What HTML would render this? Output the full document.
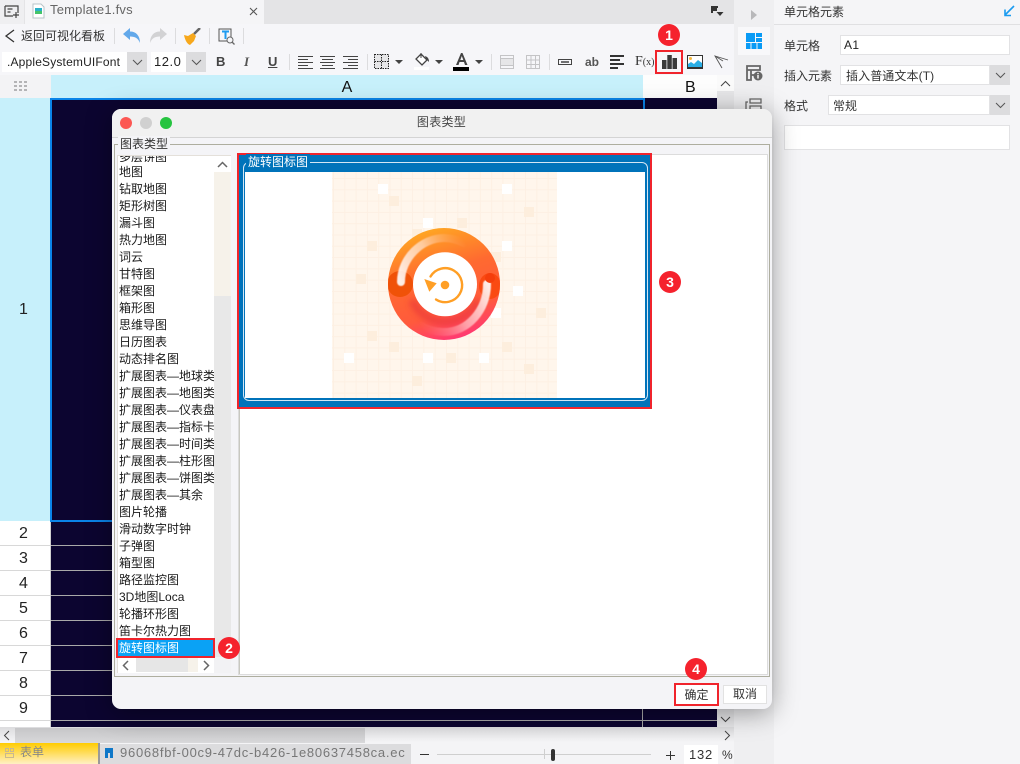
<!DOCTYPE html>
<html><head><meta charset="utf-8">
<style>
html,body{margin:0;padding:0;background:#f2f2f4}
#p{position:relative;width:1020px;height:764px;overflow:hidden;background:#f2f2f4;font-family:"Liberation Sans","Noto Sans CJK SC",sans-serif;font-size:12px;color:#222}
#p div,#p svg{position:absolute}
.t{white-space:nowrap;line-height:16px}
.b{background:#fff}
.sep{width:1px;background:#dcdcde}
.rn{left:0;width:50px;padding-right:3px;text-align:center;font-size:16px;line-height:25px;height:25px;background:#fff;color:#222;border-bottom:1px solid #d8d8d8;box-sizing:border-box}
.gl{left:51px;width:666px;height:1px;background:#a9a9a9}
.li{left:119px;width:95px;height:17px;line-height:17px;overflow:hidden;white-space:nowrap;font-size:12px;color:#1a1a1a}
.w{background:#fff}.o{background:#fdeedd}
.sq{width:10px;height:10px}
.badge{width:22px;height:22px;border-radius:50%;background:#f5222d;color:#fff;font-weight:bold;font-size:14px;line-height:22px;text-align:center}
.dd{width:0;height:0;border-left:4px solid transparent;border-right:4px solid transparent;border-top:4px solid #444}
</style></head><body><div id="p">

<!-- tab bar -->
<div style="left:0;top:0;width:734px;height:24px;background:#e4e4e6"></div>
<div style="left:0;top:0;width:24px;height:24px;background:#efeff1"></div>
<svg style="left:4px;top:5px" width="17" height="14" viewBox="0 0 17 14" fill="none" stroke="#444" stroke-width="1.2"><path d="M1 1h13v7M1 1v10h8M3.500 4h5M3.500 7h3"/><path d="M12 7v6M9 10h6"/></svg>
<div style="left:25px;top:0;width:239px;height:24px;background:#f5f5f7"></div>
<svg style="left:32px;top:3px" width="13" height="16" viewBox="0 0 13 16"><path d="M1 1h8l3 3v11H1z" fill="#fff" stroke="#b8c4c8"/><rect x="3" y="5" width="7" height="3" fill="#2ab0c8"/><rect x="3" y="8" width="7" height="3" fill="#45c46a"/></svg>
<div class="t" style="left:50px;top:2px;font-size:13px;color:#666;letter-spacing:.2px">Template1.fvs</div>
<svg style="left:248px;top:6px" width="11" height="11" viewBox="0 0 11 11" stroke="#555" stroke-width="1.1"><path d="M2 2l7 7M9 2l-7 7"/></svg>
<svg style="left:710px;top:5px" width="14" height="12" viewBox="0 0 14 12" fill="#333"><path d="M1 1h7v2H3v5H1z"/><path d="M3 3h4v3H3z"/><path d="M6.500 7h7L10 11z"/></svg>

<!-- toolbar -->
<div style="left:0;top:24px;width:734px;height:51px;background:#f6f6f9"></div>
<svg style="left:4px;top:29px" width="12" height="14" viewBox="0 0 12 14" fill="none" stroke="#333" stroke-width="1.300"><path d="M10 1L2 7l8 6"/></svg>
<div class="t" style="left:21px;top:28px;font-size:12px;color:#333">返回可视化看板</div>
<div class="sep" style="left:114px;top:28px;height:16px"></div>
<svg style="left:122px;top:28px" width="19" height="16" viewBox="0 0 19 16"><path d="M1 6L8 0v3.500c6 0 10 4 10 11.500-2-5-5-6.500-10-6.500V12z" fill="#62a8ea"/></svg>
<svg style="left:149px;top:28px" width="19" height="16" viewBox="0 0 19 16"><path d="M18 6L11 0v3.500C5 3.500 1 7.500 1 15c2-5 5-6.500 10-6.500V12z" fill="#d2d2d4"/></svg>
<div class="sep" style="left:175px;top:28px;height:16px"></div>
<svg style="left:183px;top:28px" width="18" height="17" viewBox="0 0 18 17"><path d="M11 6l6-6" stroke="#666" stroke-width="2.500"/><path d="M1 7l4 1 5-3 3 3-2 5-4 4c-3-1-5-5-6-10z" fill="#f7a81c"/></svg>
<div class="sep" style="left:209px;top:28px;height:16px"></div>
<svg style="left:218px;top:28px" width="17" height="17" viewBox="0 0 17 17" fill="none"><path d="M1 1h12v12H1z" stroke="#555"/><path d="M4 3.500h7M7.500 3.500V11" stroke="#1e9bf0" stroke-width="2"/><circle cx="12" cy="12" r="3" fill="#f6f6f9" stroke="#666"/><path d="M14 14l2.500 2.500" stroke="#666" stroke-width="1.300"/></svg>
<div class="sep" style="left:243px;top:28px;height:16px"></div>

<div class="b" style="left:2px;top:52px;width:125px;height:20px"></div>
<div style="left:127px;top:52px;width:20px;height:20px;background:#dcdcde"></div>
<svg style="left:132px;top:59px" width="11" height="7" viewBox="0 0 11 7" fill="none" stroke="#555" stroke-width="1"><path d="M1 1l4.500 4.500L10 1"/></svg>
<div class="t" style="left:7px;top:54px;font-size:12px;color:#222;letter-spacing:.17px">.AppleSystemUIFont</div>
<div class="b" style="left:151px;top:52px;width:35px;height:20px"></div>
<div style="left:186px;top:52px;width:20px;height:20px;background:#dcdcde"></div>
<svg style="left:191px;top:59px" width="11" height="7" viewBox="0 0 11 7" fill="none" stroke="#555" stroke-width="1"><path d="M1 1l4.500 4.500L10 1"/></svg>
<div class="t" style="left:154px;top:54px;font-size:13px;color:#222;letter-spacing:.5px">12.0</div>
<div class="t" style="left:216px;top:54px;font-size:13px;font-weight:bold;color:#444">B</div>
<div class="t" style="left:244px;top:54px;font-size:13px;font-weight:bold;font-style:italic;font-family:'Liberation Serif',serif;color:#555">I</div>
<div class="t" style="left:268px;top:54px;font-size:13px;font-weight:bold;color:#444;text-decoration:underline">U</div>
<div class="sep" style="left:289px;top:54px;height:16px"></div>
<svg style="left:298px;top:56px" width="60" height="13" viewBox="0 0 60 13" stroke="#444" stroke-width="1"><path d="M0 .5h15M0 3.500h10M0 6.500h15M0 9.500h10M0 12.500h15"/><path d="M22 .5h15M24 3.500h11M22 6.500h15M24 9.500h11M22 12.500h15"/><path d="M45 .5h15M50 3.500h10M45 6.500h15M50 9.500h10M45 12.500h15"/></svg>
<div class="sep" style="left:367px;top:54px;height:16px"></div>
<svg style="left:374px;top:54px" width="16" height="16" viewBox="0 0 16 16" fill="#e6e6e8" stroke="#222" stroke-dasharray="1.500 1"><path d="M.5.500h14v14H.5zM.5 7.500h14M7.500.500v14"/></svg>
<div class="dd" style="left:395px;top:60px"></div>
<svg style="left:413px;top:52px" width="18" height="18" viewBox="0 0 18 18"><path d="M8 2l6 6-5 5-6-6z" fill="#fff" stroke="#444" stroke-width="1.300"/><path d="M8 1v5" stroke="#444"/><path d="M12 4c3 1 4 3 4 6l-3-3z" fill="#444"/><rect x="1" y="15" width="15" height="3" fill="#fff"/></svg>
<div class="dd" style="left:435px;top:60px"></div>
<svg style="left:453px;top:52px" width="17" height="19" viewBox="0 0 17 19"><path d="M3 13L8 1h1.500l5 12h-2.500l-1-3H6.500l-1 3zM7.300 8h3L8.800 4z" fill="#444"/><rect x="0" y="15" width="16" height="4" fill="#000"/></svg>
<div class="dd" style="left:475px;top:60px"></div>
<div class="sep" style="left:491px;top:54px;height:16px"></div>
<svg style="left:500px;top:55px" width="42" height="14" viewBox="0 0 42 14" fill="none" stroke="#c4c4c6"><path d="M.5.500h13v13H.5z"/><rect x="1" y="4" width="12" height="6" fill="#e6e6e8" stroke="none"/><path d="M1 3.500h12M1 10.500h12"/><path d="M26.500.500h13v13h-13zM26.500 5h13M26.500 9.500h13M31 .500v13M35.500 .500v13"/></svg>
<div class="sep" style="left:549px;top:54px;height:16px"></div>
<svg style="left:558px;top:59px" width="14" height="6" viewBox="0 0 14 6" fill="none" stroke="#444"><path d="M.5.500h13v5H.5z"/><path d="M3 3h8" stroke-width="1.500"/></svg>
<div class="t" style="left:585px;top:54px;font-size:12px;font-weight:bold;color:#555">ab</div>
<svg style="left:610px;top:55px" width="15" height="14" viewBox="0 0 15 14" stroke="#333" stroke-width="2"><path d="M0 1h14M0 5h10M0 9h14M0 13h8"/></svg>
<div class="t" style="left:635px;top:54px;font-size:14px;font-family:'Liberation Serif',serif;color:#333">F<span style="font-size:10px">(x)</span></div>
<div style="left:655px;top:50px;width:28px;height:24px;border:2px solid #f0242c;box-sizing:border-box"></div>
<svg style="left:662px;top:55px" width="15" height="14" viewBox="0 0 15 14" fill="#3a3a3a"><rect x="0" y="5" width="4.500" height="9"/><rect x="5.300" y="0" width="4.500" height="14"/><rect x="10.500" y="3" width="4.500" height="11"/></svg>
<svg style="left:687px;top:55px" width="16" height="14" viewBox="0 0 16 14"><rect width="16" height="14" fill="#333"/><rect x="1" y="1" width="14" height="11" fill="#fff"/><circle cx="3.500" cy="3.500" r="1.500" fill="#f5b83d"/><path d="M1 12l0-3 3-2 3 2 4-4 4 3v4z" fill="#29aee6"/></svg>
<svg style="left:714px;top:55px" width="15" height="14" viewBox="0 0 15 14" fill="none" stroke="#555" stroke-width=".9"><path d="M14 5L1 1l7 12M1 1l8 5"/></svg>

<!-- sheet header -->
<div style="left:0;top:75px;width:50px;height:23px;background:#f3f3f5"></div>
<svg style="left:14px;top:81px" width="13" height="11" fill="#b4b4b6"><rect x="0" y="0" width="3" height="2"/><rect x="5" y="0" width="3" height="2"/><rect x="10" y="0" width="3" height="2"/><rect x="0" y="4" width="3" height="2"/><rect x="5" y="4" width="3" height="2"/><rect x="10" y="4" width="3" height="2"/><rect x="0" y="8" width="3" height="2"/><rect x="5" y="8" width="3" height="2"/><rect x="10" y="8" width="3" height="2"/></svg>
<div style="left:51px;top:75px;width:592px;height:23px;background:#c7f0fb;line-height:25px;text-align:center;font-size:16px;color:#111">A</div>
<div style="left:643px;top:75px;width:74px;height:23px;background:#fdfdfd"></div>
<div class="t" style="left:685px;top:75px;line-height:25px;font-size:16px;color:#111">B</div>
<div style="left:717px;top:75px;width:17px;height:652px;background:#e6e6e8"></div>
<div style="left:717px;top:75px;width:17px;height:16px;background:#fafafa"></div>
<svg style="left:720px;top:80px" width="11" height="7" fill="none" stroke="#444"><path d="M1 6l4.500-4.500L10 6"/></svg>
<svg style="left:720px;top:716px" width="11" height="7" fill="none" stroke="#444"><path d="M1 1l4.500 4.500L10 1"/></svg>

<!-- sheet -->
<div style="left:51px;top:98px;width:666px;height:629px;background:#0c0530"></div>
<div style="left:0;top:98px;width:50px;height:423px;padding-right:3px;box-sizing:border-box;background:#c7f0fb;text-align:center;line-height:423px;font-size:16px">1</div>
<div class="rn" style="top:521px">2</div><div class="rn" style="top:546px">3</div><div class="rn" style="top:571px">4</div><div class="rn" style="top:596px">5</div><div class="rn" style="top:621px">6</div><div class="rn" style="top:646px">7</div><div class="rn" style="top:671px">8</div><div class="rn" style="top:696px">9</div>
<div style="left:0;top:721px;width:50px;height:6px;background:#fff"></div>
<div style="left:50px;top:98px;width:1px;height:629px;background:#d0d0d0"></div>
<div class="gl" style="top:545px"></div><div class="gl" style="top:570px"></div><div class="gl" style="top:595px"></div><div class="gl" style="top:620px"></div><div class="gl" style="top:645px"></div><div class="gl" style="top:670px"></div><div class="gl" style="top:695px"></div><div class="gl" style="top:720px"></div>
<div style="left:642px;top:522px;width:1px;height:205px;background:#a9a9a9"></div>
<div style="left:50px;top:98px;width:595px;height:424px;border:2px solid #0a84e8;box-sizing:border-box"></div>

<!-- bottom -->
<div style="left:0;top:727px;width:734px;height:37px;background:linear-gradient(#dcdcde,#f4f4f6 40%,#f4f4f6)"></div>
<div style="left:15px;top:728px;width:350px;height:15px;background:linear-gradient(#c6c6c8,#d8d8da)"></div>
<svg style="left:3px;top:730px" width="8" height="11" fill="none" stroke="#444"><path d="M6 1L1.500 5.500 6 10"/></svg>
<svg style="left:723px;top:730px" width="8" height="11" fill="none" stroke="#444"><path d="M2 1l4.500 4.500L2 10"/></svg>
<div style="left:0;top:743px;width:98px;height:21px;background:linear-gradient(#ffcc00,#fff0c4)"></div>
<div class="t" style="left:20px;top:744px;font-size:12px;color:#888">表单</div>
<svg style="left:5px;top:748px" width="9" height="10" fill="none" stroke="#c8b890"><path d="M.5.500h3v3h-3zM5.500.500h3v3h-3zM.5 5.500h8v4h-8z"/></svg>
<div style="left:98px;top:743px;width:2px;height:21px;background:#999"></div>
<div style="left:100px;top:744px;width:311px;height:20px;background:#dcdcde"></div>
<svg style="left:105px;top:748px" width="8" height="10"><path d="M0 0h8v10H5V5H3v5H0z" fill="#0f78c8"/></svg>
<div class="t" style="left:120px;top:745px;font-size:13px;color:#777;letter-spacing:.74px">96068fbf-00c9-47dc-b426-1e80637458ca.ec</div>
<div style="left:420px;top:754px;width:9px;height:1px;background:#333"></div>
<div style="left:437px;top:754px;width:214px;height:1px;background:#cfcfcf"></div>
<div style="left:544px;top:749px;width:1px;height:10px;background:#cfcfcf"></div>
<div style="left:551px;top:749px;width:4px;height:12px;border-radius:2px;background:#333"></div>
<svg style="left:665px;top:750px" width="11" height="11" stroke="#333"><path d="M1 5.500h9M5.500 1v9"/></svg>
<div class="b" style="left:684px;top:745px;width:34px;height:19px;text-align:center;line-height:19px;font-size:13px;letter-spacing:.8px;color:#333">132</div>
<div class="t" style="left:722px;top:747px;font-size:12px;color:#333">%</div>

<!-- right strip -->
<div style="left:734px;top:0;width:40px;height:764px;background:#efeff1"></div>
<svg style="left:751px;top:10px" width="6" height="10"><path d="M0 0l6 5-6 5z" fill="#b8b8ba"/></svg>
<div style="left:738px;top:27px;width:32px;height:28px;background:#f8f8fa"></div>
<svg style="left:746px;top:33px" width="16" height="16" fill="#0a9bf5"><rect width="9" height="9"/><rect x="10" width="6" height="4"/><rect x="10" y="5" width="6" height="4"/><rect y="10" width="4.500" height="6"/><rect x="5.500" y="10" width="5" height="6"/><rect x="11.500" y="10" width="4.500" height="6"/></svg>
<svg style="left:746px;top:65px" width="17" height="16" viewBox="0 0 17 16"><path d="M1 1h13v4H1zM1 5h4v10H1zM5 10h3" fill="none" stroke="#666" stroke-width="1.800"/><path d="M5 5h5" stroke="#666"/><circle cx="12" cy="11" r="4.500" fill="#666"/><rect x="11.300" y="10" width="1.400" height="3.500" fill="#fff"/><rect x="11.300" y="8" width="1.400" height="1.200" fill="#fff"/></svg>
<svg style="left:745px;top:98px" width="18" height="12" fill="none" stroke="#666" stroke-width="1.300"><path d="M5 1h11v4H5zM5 8h11v4H5zM3 4H1v8h2"/></svg>

<!-- right panel -->
<div style="left:774px;top:0;width:246px;height:764px;background:#f5f5f7"></div>
<div style="left:774px;top:24px;width:246px;height:1px;background:#e0e0e2"></div>
<div class="t" style="left:784px;top:4px;color:#333">单元格元素</div>
<svg style="left:1003px;top:5px" width="12" height="12" fill="none" stroke="#1a9bf0" stroke-width="1.600"><path d="M11 1L2 10M2 4.500V10.500H8"/></svg>
<div class="t" style="left:784px;top:38px;color:#333">单元格</div>
<div class="b" style="left:840px;top:35px;width:170px;height:20px;border:1px solid #e2e2e4;box-sizing:border-box"></div>
<div class="t" style="left:844px;top:37px;font-size:12px;color:#222;letter-spacing:.4px">A1</div>
<div class="t" style="left:784px;top:68px;color:#333">插入元素</div>
<div class="b" style="left:840px;top:65px;width:150px;height:20px;border:1px solid #e2e2e4;box-sizing:border-box"></div>
<div style="left:990px;top:65px;width:20px;height:20px;background:#dcdcde"></div>
<svg style="left:995px;top:72px" width="11" height="7" fill="none" stroke="#555"><path d="M1 1l4.500 4.500L10 1"/></svg>
<div class="t" style="left:846px;top:68px;color:#333;letter-spacing:.1px">插入普通文本(T)</div>
<div class="t" style="left:784px;top:98px;color:#333">格式</div>
<div class="b" style="left:828px;top:95px;width:162px;height:20px;border:1px solid #e2e2e4;box-sizing:border-box"></div>
<div style="left:990px;top:95px;width:20px;height:20px;background:#dcdcde"></div>
<svg style="left:995px;top:102px" width="11" height="7" fill="none" stroke="#555"><path d="M1 1l4.500 4.500L10 1"/></svg>
<div class="t" style="left:833px;top:98px;color:#333">常规</div>
<div class="b" style="left:784px;top:125px;width:226px;height:25px;border:1px solid #e2e2e4;box-sizing:border-box"></div>

<!-- dialog -->
<div style="left:112px;top:109px;width:660px;height:600px;background:#f4f4f7;border-radius:9px;box-shadow:0 4px 26px rgba(0,0,0,.38)"></div>
<div style="left:112px;top:109px;width:660px;height:28px;background:#f1f1f1;border-radius:9px 9px 0 0;border-bottom:1px solid #d4d4d4;box-sizing:content-box"></div>
<div style="left:120px;top:117px;width:12px;height:12px;border-radius:50%;background:#fc5753"></div>
<div style="left:140px;top:117px;width:12px;height:12px;border-radius:50%;background:#d0d0d0"></div>
<div style="left:160px;top:117px;width:12px;height:12px;border-radius:50%;background:#26c440"></div>
<div class="t" style="left:0;top:114px;width:883px;text-align:center;font-size:12px;color:#444;letter-spacing:.3px">图表类型</div>

<div style="left:114px;top:144px;width:656px;height:533px;border:1px solid #aeae9f;box-sizing:border-box"></div>
<div class="t" style="left:118px;top:136px;padding:0 2px;background:#f4f4f7;color:#333">图表类型</div>

<!-- list -->
<div style="left:117px;top:155px;width:114px;height:518px;background:#fff;border:1px solid #e4e0da;box-sizing:border-box"></div>
<div style="left:214px;top:156px;width:17px;height:501px;background:#f6f2ea"></div>
<div style="left:214px;top:296px;width:17px;height:361px;background:#e8e8e8"></div>
<div style="left:214px;top:657px;width:17px;height:16px;background:#f2f2f4"></div>
<div style="left:214px;top:156px;width:17px;height:16px;background:#fff"></div>
<svg style="left:217px;top:161px" width="11" height="7" fill="none" stroke="#666" stroke-width="1.500"><path d="M1 6l4.500-4.500L10 6"/></svg>
<div style="left:118px;top:156px;width:96px;height:6px;overflow:hidden"><div class="li" style="left:1px;top:-7px">多层饼图</div></div>
<div class="li" style="top:164px">地图</div>
<div class="li" style="top:181px">钻取地图</div>
<div class="li" style="top:198px">矩形树图</div>
<div class="li" style="top:215px">漏斗图</div>
<div class="li" style="top:232px">热力地图</div>
<div class="li" style="top:249px">词云</div>
<div class="li" style="top:266px">甘特图</div>
<div class="li" style="top:283px">框架图</div>
<div class="li" style="top:300px">箱形图</div>
<div class="li" style="top:317px">思维导图</div>
<div class="li" style="top:334px">日历图表</div>
<div class="li" style="top:351px">动态排名图</div>
<div class="li" style="top:368px">扩展图表—地球类</div>
<div class="li" style="top:385px">扩展图表—地图类</div>
<div class="li" style="top:402px">扩展图表—仪表盘</div>
<div class="li" style="top:419px">扩展图表—指标卡</div>
<div class="li" style="top:436px">扩展图表—时间类</div>
<div class="li" style="top:453px">扩展图表—柱形图</div>
<div class="li" style="top:470px">扩展图表—饼图类</div>
<div class="li" style="top:487px">扩展图表—其余</div>
<div class="li" style="top:504px">图片轮播</div>
<div class="li" style="top:521px">滑动数字时钟</div>
<div class="li" style="top:538px">子弹图</div>
<div class="li" style="top:555px">箱型图</div>
<div class="li" style="top:572px">路径监控图</div>
<div class="li" style="top:589px">3D地图Loca</div>
<div class="li" style="top:606px">轮播环形图</div>
<div class="li" style="top:623px">笛卡尔热力图</div>
<div style="left:116px;top:638px;width:99px;height:20px;border:2px solid #f0242c;box-sizing:border-box;background:#0aa2f5"></div>
<div class="li" style="top:640px;color:#fff">旋转图标图</div>
<div style="left:118px;top:658px;width:96px;height:15px;background:#fff"></div>
<div style="left:136px;top:658px;width:52px;height:14px;background:#e6e6e6"></div>
<div style="left:188px;top:658px;width:10px;height:14px;background:#f6f2ea"></div>
<svg style="left:122px;top:660px" width="8" height="11" fill="none" stroke="#666" stroke-width="1.500"><path d="M6 1L1.500 5.500 6 10"/></svg>
<svg style="left:202px;top:660px" width="8" height="11" fill="none" stroke="#666" stroke-width="1.500"><path d="M2 1l4.500 4.500L2 10"/></svg>

<!-- preview panel -->
<div style="left:238px;top:154px;width:530px;height:521px;background:#fff;border:1px solid #dcdcdc;box-sizing:border-box"></div>
<div style="left:239px;top:155px;width:1px;height:519px;background:#c8c8c0"></div>
<div style="left:237px;top:153px;width:415px;height:256px;border:2px solid #f0242c;box-sizing:border-box;background:#0073ba"></div>
<div style="left:243px;top:162px;width:405px;height:239px;border:1px solid #d4e6f4;border-radius:6px;box-sizing:border-box"></div>
<div style="left:245px;top:172px;width:400px;height:226px;background:#fff"></div>
<div class="t" style="left:246px;top:154px;padding:0 2px;background:#0073ba;color:#fff">旋转图标图</div>

<!-- picture -->
<div style="left:332px;top:172px;width:225px;height:226px;background-color:#fff6ec;background-image:linear-gradient(#fdf0e3 1px,transparent 1px),linear-gradient(90deg,#fdf0e3 1px,transparent 1px);background-size:11.300px 11.300px;background-position:1px 6px"></div>
<div class="sq w" style="left:378px;top:184px"></div><div class="sq w" style="left:502px;top:184px"></div><div class="sq w" style="left:423px;top:218px"></div><div class="sq w" style="left:502px;top:241px"></div><div class="sq w" style="left:513px;top:286px"></div><div class="sq w" style="left:491px;top:308px"></div><div class="sq w" style="left:344px;top:353px"></div><div class="sq w" style="left:423px;top:353px"></div><div class="sq w" style="left:479px;top:353px"></div>
<div class="sq o" style="left:389px;top:196px"></div><div class="sq o" style="left:524px;top:207px"></div><div class="sq o" style="left:457px;top:218px"></div><div class="sq o" style="left:412px;top:229px"></div><div class="sq o" style="left:367px;top:241px"></div><div class="sq o" style="left:491px;top:252px"></div><div class="sq o" style="left:356px;top:274px"></div><div class="sq o" style="left:536px;top:308px"></div><div class="sq o" style="left:367px;top:331px"></div><div class="sq o" style="left:389px;top:342px"></div><div class="sq o" style="left:502px;top:342px"></div><div class="sq o" style="left:446px;top:353px"></div><div class="sq o" style="left:524px;top:364px"></div><div class="sq o" style="left:412px;top:376px"></div>

<svg style="left:384px;top:224px" width="120" height="120" viewBox="0 0 120 120">
<defs>
<linearGradient id="g" x1=".3" y1="0" x2=".6" y2="1"><stop offset="0" stop-color="#ffaa22"/><stop offset=".4" stop-color="#ff6a30"/><stop offset=".75" stop-color="#ff5a3c"/><stop offset="1" stop-color="#ff3874"/></linearGradient>
<linearGradient id="a1" gradientUnits="userSpaceOnUse" x1="17" y1="58" x2="82" y2="19"><stop offset="0" stop-color="#fff" stop-opacity=".9"/><stop offset=".5" stop-color="#ffe2d0" stop-opacity=".7"/><stop offset="1" stop-color="#ffb080" stop-opacity="0"/></linearGradient>
<linearGradient id="a2" gradientUnits="userSpaceOnUse" x1="103" y1="60" x2="36" y2="102"><stop offset="0" stop-color="#fff" stop-opacity=".9"/><stop offset=".5" stop-color="#ffd0d0" stop-opacity=".65"/><stop offset="1" stop-color="#ff9090" stop-opacity="0"/></linearGradient>
<filter id="bl" x="-30%" y="-30%" width="160%" height="160%"><feGaussianBlur stdDeviation="3"/></filter>
<filter id="bs" x="-30%" y="-30%" width="160%" height="160%"><feGaussianBlur stdDeviation=".6"/></filter>
<clipPath id="c"><circle cx="60" cy="60" r="56"/></clipPath>
</defs>
<circle cx="60" cy="60" r="56" fill="url(#g)"/>
<g clip-path="url(#c)">
<ellipse cx="16" cy="60" rx="13" ry="13" fill="#f05208"/>
<ellipse cx="106" cy="62" rx="11" ry="13" fill="#fa4a12"/>
<path d="M28 76A36 36 0 0 0 94 76" fill="none" stroke="#e8363a" stroke-width="8" opacity=".6" filter="url(#bl)"/>
<path d="M17 58C17 34 38 14 60 14 68 14 74 16 80 19" fill="none" stroke="url(#a1)" stroke-width="8" stroke-linecap="round" filter="url(#bs)"/>
<path d="M103 60C103 86 84 108 60 108 52 108 44 106 37 102" fill="none" stroke="url(#a2)" stroke-width="8" stroke-linecap="round" filter="url(#bs)"/>
<circle cx="106" cy="54" r="5" fill="#f53e0c"/>
</g>
<circle cx="61" cy="60.300" r="32" fill="#fff"/>
<path d="M46.500 52.500A17 17 0 1 1 52 75.500" fill="none" stroke="#ff9f25" stroke-width="2.400" stroke-linecap="round"/>
<path d="M40.300 55L52.700 59.300 45.300 67.700z" fill="#ff9f25"/>
<circle cx="61" cy="61" r="4.300" fill="#ff9f25"/>
</svg>

<!-- buttons -->
<div style="left:674px;top:683px;width:45px;height:23px;background:#fff;border:2px solid #f0242c;box-sizing:border-box;text-align:center;line-height:20px;color:#333">确定</div>
<div style="left:723px;top:685px;width:44px;height:19px;background:#fff;border:1px solid #e2e2e2;box-sizing:border-box;text-align:center;line-height:17px;color:#333">取消</div>

<!-- badges -->
<div class="badge" style="left:658px;top:24px">1</div>
<div class="badge" style="left:218px;top:637px">2</div>
<div class="badge" style="left:659px;top:271px">3</div>
<div class="badge" style="left:685px;top:658px">4</div>
</div></body></html>
